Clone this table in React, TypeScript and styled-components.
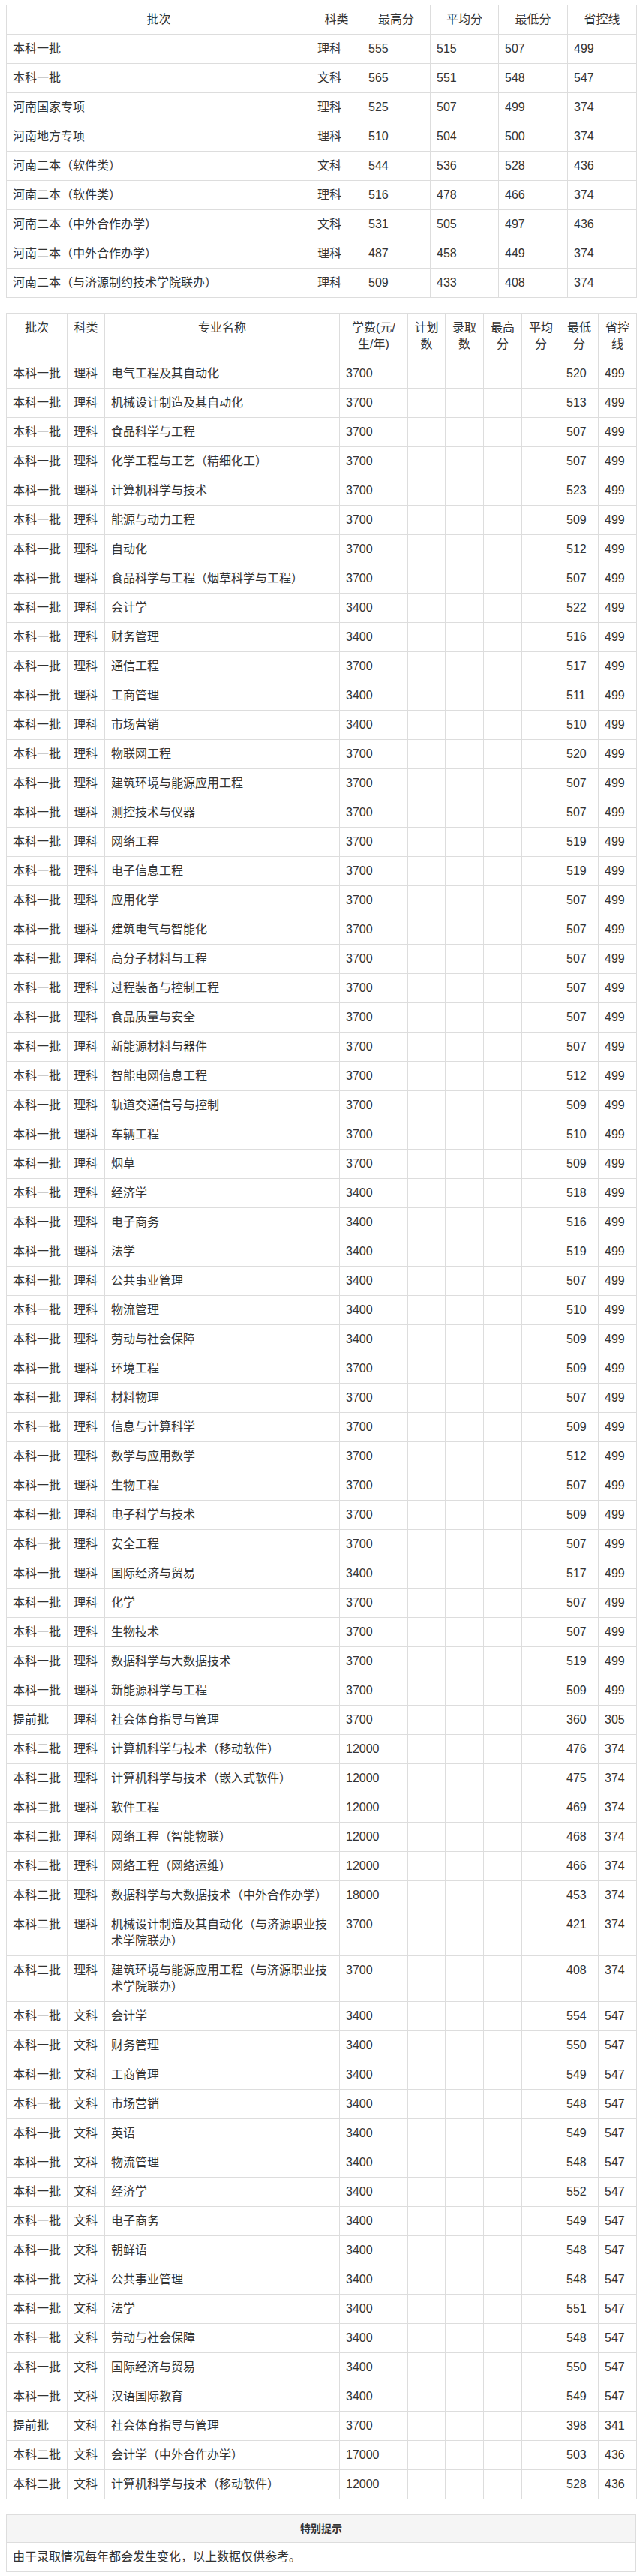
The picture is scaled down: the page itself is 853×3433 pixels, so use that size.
import styled, { createGlobalStyle } from "styled-components";

const GlobalStyle = createGlobalStyle`
  html, body {
    margin: 0;
    padding: 0;
    background: #fff;
  }
  body {
    font-family: "Liberation Sans", "Noto Sans CJK SC", sans-serif;
    font-size: 16px;
    color: #333;
  }
`;

const Page = styled.div`
  width: 840px;
  margin: 6px 0 6px 8px;
`;

const Table = styled.table`
  width: 840px;
  table-layout: fixed;
  border-collapse: collapse;
  margin-bottom: 20px;
`;

const Col = styled.col<{ $w: number }>`
  width: ${p => p.$w}px;
`;

const HeadCell = styled.th`
  border: 1px solid #ddd;
  padding: 8px;
  line-height: 22px;
  font-weight: normal;
  text-align: center;
  vertical-align: top;
`;

const Cell = styled.td`
  border: 1px solid #ddd;
  padding: 8px;
  line-height: 22px;
  text-align: left;
  vertical-align: top;
`;

const NoticeBox = styled.div`
  border: 1px solid #ddd;
`;

const NoticeTitle = styled.div`
  background: #f5f5f5;
  border-bottom: 1px solid #ddd;
  padding: 8px;
  font-size: 14px;
  line-height: 20px;
  font-weight: bold;
  text-align: center;
`;

const NoticeText = styled.div`
  padding: 8px;
  line-height: 22px;
`;

const summary: string[][] = [
  ["本科一批", "理科", "555", "515", "507", "499"],
  ["本科一批", "文科", "565", "551", "548", "547"],
  ["河南国家专项", "理科", "525", "507", "499", "374"],
  ["河南地方专项", "理科", "510", "504", "500", "374"],
  ["河南二本（软件类）", "文科", "544", "536", "528", "436"],
  ["河南二本（软件类）", "理科", "516", "478", "466", "374"],
  ["河南二本（中外合作办学）", "文科", "531", "505", "497", "436"],
  ["河南二本（中外合作办学）", "理科", "487", "458", "449", "374"],
  ["河南二本（与济源制约技术学院联办）", "理科", "509", "433", "408", "374"],
];

const A = "本科一批";
const B = "本科二批";
const T = "提前批";

// [批次, 科类, 专业, 学费, 最低分, 省控线]  ("|" marks the line break seen in the long names)
const majors: string[][] = [
  [A, "理科", "电气工程及其自动化", "3700", "520", "499"],
  [A, "理科", "机械设计制造及其自动化", "3700", "513", "499"],
  [A, "理科", "食品科学与工程", "3700", "507", "499"],
  [A, "理科", "化学工程与工艺（精细化工）", "3700", "507", "499"],
  [A, "理科", "计算机科学与技术", "3700", "523", "499"],
  [A, "理科", "能源与动力工程", "3700", "509", "499"],
  [A, "理科", "自动化", "3700", "512", "499"],
  [A, "理科", "食品科学与工程（烟草科学与工程）", "3700", "507", "499"],
  [A, "理科", "会计学", "3400", "522", "499"],
  [A, "理科", "财务管理", "3400", "516", "499"],
  [A, "理科", "通信工程", "3700", "517", "499"],
  [A, "理科", "工商管理", "3400", "511", "499"],
  [A, "理科", "市场营销", "3400", "510", "499"],
  [A, "理科", "物联网工程", "3700", "520", "499"],
  [A, "理科", "建筑环境与能源应用工程", "3700", "507", "499"],
  [A, "理科", "测控技术与仪器", "3700", "507", "499"],
  [A, "理科", "网络工程", "3700", "519", "499"],
  [A, "理科", "电子信息工程", "3700", "519", "499"],
  [A, "理科", "应用化学", "3700", "507", "499"],
  [A, "理科", "建筑电气与智能化", "3700", "507", "499"],
  [A, "理科", "高分子材料与工程", "3700", "507", "499"],
  [A, "理科", "过程装备与控制工程", "3700", "507", "499"],
  [A, "理科", "食品质量与安全", "3700", "507", "499"],
  [A, "理科", "新能源材料与器件", "3700", "507", "499"],
  [A, "理科", "智能电网信息工程", "3700", "512", "499"],
  [A, "理科", "轨道交通信号与控制", "3700", "509", "499"],
  [A, "理科", "车辆工程", "3700", "510", "499"],
  [A, "理科", "烟草", "3700", "509", "499"],
  [A, "理科", "经济学", "3400", "518", "499"],
  [A, "理科", "电子商务", "3400", "516", "499"],
  [A, "理科", "法学", "3400", "519", "499"],
  [A, "理科", "公共事业管理", "3400", "507", "499"],
  [A, "理科", "物流管理", "3400", "510", "499"],
  [A, "理科", "劳动与社会保障", "3400", "509", "499"],
  [A, "理科", "环境工程", "3700", "509", "499"],
  [A, "理科", "材料物理", "3700", "507", "499"],
  [A, "理科", "信息与计算科学", "3700", "509", "499"],
  [A, "理科", "数学与应用数学", "3700", "512", "499"],
  [A, "理科", "生物工程", "3700", "507", "499"],
  [A, "理科", "电子科学与技术", "3700", "509", "499"],
  [A, "理科", "安全工程", "3700", "507", "499"],
  [A, "理科", "国际经济与贸易", "3400", "517", "499"],
  [A, "理科", "化学", "3700", "507", "499"],
  [A, "理科", "生物技术", "3700", "507", "499"],
  [A, "理科", "数据科学与大数据技术", "3700", "519", "499"],
  [A, "理科", "新能源科学与工程", "3700", "509", "499"],
  [T, "理科", "社会体育指导与管理", "3700", "360", "305"],
  [B, "理科", "计算机科学与技术（移动软件）", "12000", "476", "374"],
  [B, "理科", "计算机科学与技术（嵌入式软件）", "12000", "475", "374"],
  [B, "理科", "软件工程", "12000", "469", "374"],
  [B, "理科", "网络工程（智能物联）", "12000", "468", "374"],
  [B, "理科", "网络工程（网络运维）", "12000", "466", "374"],
  [B, "理科", "数据科学与大数据技术（中外合作办学）", "18000", "453", "374"],
  [B, "理科", "机械设计制造及其自动化（与济源职业技|术学院联办）", "3700", "421", "374"],
  [B, "理科", "建筑环境与能源应用工程（与济源职业技|术学院联办）", "3700", "408", "374"],
  [A, "文科", "会计学", "3400", "554", "547"],
  [A, "文科", "财务管理", "3400", "550", "547"],
  [A, "文科", "工商管理", "3400", "549", "547"],
  [A, "文科", "市场营销", "3400", "548", "547"],
  [A, "文科", "英语", "3400", "549", "547"],
  [A, "文科", "物流管理", "3400", "548", "547"],
  [A, "文科", "经济学", "3400", "552", "547"],
  [A, "文科", "电子商务", "3400", "549", "547"],
  [A, "文科", "朝鲜语", "3400", "548", "547"],
  [A, "文科", "公共事业管理", "3400", "548", "547"],
  [A, "文科", "法学", "3400", "551", "547"],
  [A, "文科", "劳动与社会保障", "3400", "548", "547"],
  [A, "文科", "国际经济与贸易", "3400", "550", "547"],
  [A, "文科", "汉语国际教育", "3400", "549", "547"],
  [T, "文科", "社会体育指导与管理", "3700", "398", "341"],
  [B, "文科", "会计学（中外合作办学）", "17000", "503", "436"],
  [B, "文科", "计算机科学与技术（移动软件）", "12000", "528", "436"],
];

function MajorName({ text }: { text: string }) {
  const parts = text.split("|");
  return (
    <>
      {parts.map((p, i) => (
        <span key={i}>
          {i > 0 && <br />}
          {p}
        </span>
      ))}
    </>
  );
}

export default function App() {
  return (
    <Page>
      <GlobalStyle />

      <Table>
        <colgroup>
          {[406, 68, 91, 91, 92, 92].map((w, i) => (
            <Col key={i} $w={w} />
          ))}
        </colgroup>
        <thead>
          <tr>
            <HeadCell>批次</HeadCell>
            <HeadCell>科类</HeadCell>
            <HeadCell>最高分</HeadCell>
            <HeadCell>平均分</HeadCell>
            <HeadCell>最低分</HeadCell>
            <HeadCell>省控线</HeadCell>
          </tr>
        </thead>
        <tbody>
          {summary.map((r, i) => (
            <tr key={i}>
              {r.map((v, j) => (
                <Cell key={j}>{v}</Cell>
              ))}
            </tr>
          ))}
        </tbody>
      </Table>

      <Table>
        <colgroup>
          {[81, 50, 313, 91, 50, 51, 51, 51, 51, 51].map((w, i) => (
            <Col key={i} $w={w} />
          ))}
        </colgroup>
        <thead>
          <tr>
            <HeadCell>批次</HeadCell>
            <HeadCell>科类</HeadCell>
            <HeadCell>专业名称</HeadCell>
            <HeadCell>
              学费(元/
              <br />
              生/年)
            </HeadCell>
            <HeadCell>计划数</HeadCell>
            <HeadCell>录取数</HeadCell>
            <HeadCell>最高分</HeadCell>
            <HeadCell>平均分</HeadCell>
            <HeadCell>最低分</HeadCell>
            <HeadCell>省控线</HeadCell>
          </tr>
        </thead>
        <tbody>
          {majors.map(([batch, kind, name, fee, min, ctrl], i) => (
            <tr key={i}>
              <Cell>{batch}</Cell>
              <Cell>{kind}</Cell>
              <Cell>
                <MajorName text={name} />
              </Cell>
              <Cell>{fee}</Cell>
              <Cell />
              <Cell />
              <Cell />
              <Cell />
              <Cell>{min}</Cell>
              <Cell>{ctrl}</Cell>
            </tr>
          ))}
        </tbody>
      </Table>

      <NoticeBox>
        <NoticeTitle>特别提示</NoticeTitle>
        <NoticeText>由于录取情况每年都会发生变化，以上数据仅供参考。</NoticeText>
      </NoticeBox>
    </Page>
  );
}
